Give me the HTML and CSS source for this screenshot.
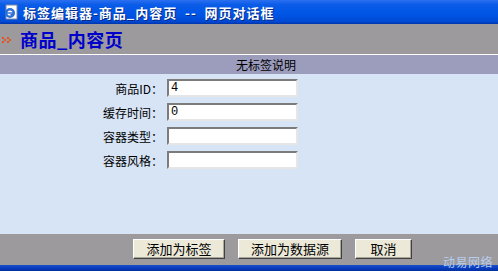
FILE: index.html
```html
<!DOCTYPE html>
<html>
  <head>
    <meta charset="UTF-8" />
    <title>标签编辑器-商品_内容页</title>
    <link rel="stylesheet" href="styles.css">
  </head>
  <body>
    <div class="window">
      <!-- Dialog title bar -->
      <div class="titlebar">
        <svg class="ie-icon" width="16" height="16" viewBox="0 0 16 16">
          <rect x="3" y="1" width="11" height="14" fill="#fff" stroke="#7a8aa8" />
          <circle cx="7" cy="9" r="5" fill="#2c6fd6" />
          <circle cx="7" cy="9" r="2.6" fill="#fff" />
          <rect x="4" y="8.3" width="6" height="1.4" fill="#2c6fd6" />
          <rect x="7.5" y="9.7" width="3" height="2" fill="#2c6fd6" />
        </svg>
        <span class="title-text">标签编辑器-商品_内容页  --  网页对话框</span>
      </div>

      <!-- Page heading -->
      <div class="heading">
        <svg class="arrows" width="10" height="6" viewBox="0 0 10 6">
          <path d="M0 0h2v2h-2zM2 2h2v2h-2zM0 4h2v2h-2zM5 0h2v2h-2zM7 2h2v2h-2zM5 4h2v2h-2z" fill="#e2541c" />
        </svg>
        <span class="heading-text">商品_内容页</span>
      </div>

      <div class="caption">无标签说明</div>

      <!-- Fields -->
      <div class="content">
        <div class="row">
          <label class="label">商品ID：</label>
          <input class="field" type="text" value="4" />
        </div>
        <div class="row">
          <label class="label">缓存时间：</label>
          <input class="field" type="text" value="0" />
        </div>
        <div class="row">
          <label class="label">容器类型：</label>
          <input class="field" type="text" value="" />
        </div>
        <div class="row">
          <label class="label">容器风格：</label>
          <input class="field" type="text" value="" />
        </div>
      </div>

      <!-- Buttons -->
      <div class="footer">
        <button class="btn btn-tag">添加为标签</button>
        <button class="btn btn-source">添加为数据源</button>
        <button class="btn btn-cancel">取消</button>
        <span class="watermark">动易网络</span>
      </div>

      <div class="taskbar"></div>
    </div>
  </body>
</html>
```

FILE: styles.css
```css
body {
  margin: 0;
  padding: 0;
  font-family: "Noto Sans CJK SC", "DejaVu Sans", sans-serif;
  font-size: 12px;
  color: #000;
  background-color: #d7e4f6;
}

.window {
  position: relative;
  width: 498px;
  height: 271px;
  overflow: hidden;
}

.titlebar {
  height: 24px;
  display: flex;
  align-items: center;
  padding-left: 3px;
  background: linear-gradient(#2a6ff0 0%, #0a5ce8 20%, #0055e5 60%, #0049d4 90%, #0034a8 100%);
}

.ie-icon {
  flex: none;
}

.title-text {
  margin-left: 4px;
  color: #fff;
  font-weight: bold;
  font-size: 13px;
  letter-spacing: 1px;
  text-shadow: 1px 1px 0 #0a2a80;
  white-space: pre;
}

.heading {
  height: 30px;
  display: flex;
  align-items: center;
  background-color: #9c9a9c;
  border-bottom: 1px solid #fff;
  padding-left: 2px;
}

.arrows {
  flex: none;
  margin-top: 2px;
}

.heading-text {
  margin-left: 8px;
  color: #0000cc;
  font-weight: bold;
  font-size: 18px;
  letter-spacing: 0.5px;
}

.caption {
  height: 19px;
  line-height: 19px;
  background-color: #9c9cbd;
  text-align: center;
  padding-left: 34px;
  font-size: 12px;
}

.content {
  height: 155px;
  padding-top: 5px;
  background-color: #d7e4f6;
}

.row {
  display: flex;
  align-items: center;
  height: 24px;
}

.row .label {
  width: 163px;
  text-align: right;
  font-size: 12px;
  margin-top: -6px;
}

.field {
  box-sizing: border-box;
  width: 131px;
  height: 18px;
  margin: 0 0 6px 4px;
  padding: 0 2px;
  border: 2px solid;
  border-color: #7c7c7c #e6e6e6 #e6e6e6 #7c7c7c;
  background-color: #fff;
  font-family: "Liberation Mono", monospace;
  font-size: 12px;
  outline: none;
}

.footer {
  position: relative;
  height: 31px;
  box-sizing: border-box;
  display: flex;
  align-items: flex-start;
  gap: 13px;
  padding: 5px 0 0 133px;
  background-color: #9c9a9c;
}

.btn {
  box-sizing: border-box;
  height: 20px;
  padding: 0;
  background-color: #ece9d8;
  border: 1px solid;
  border-color: #fff #404040 #404040 #fff;
  box-shadow: inset -1px -1px 0 #aca899;
  font-family: "Noto Sans CJK SC", sans-serif;
  font-size: 13px;
  line-height: 16px;
  color: #000;
}

.btn-tag {
  width: 92px;
}

.btn-source {
  width: 104px;
}

.btn-cancel {
  width: 57px;
}

.watermark {
  position: absolute;
  right: 5px;
  bottom: -4px;
  color: #b8cdf0;
  font-size: 12px;
  line-height: 14px;
  letter-spacing: 0.5px;
  z-index: 2;
}

.taskbar {
  height: 6px;
  background: linear-gradient(#1a52c8, #0a3cc0 50%, #0030a0);
}
```
